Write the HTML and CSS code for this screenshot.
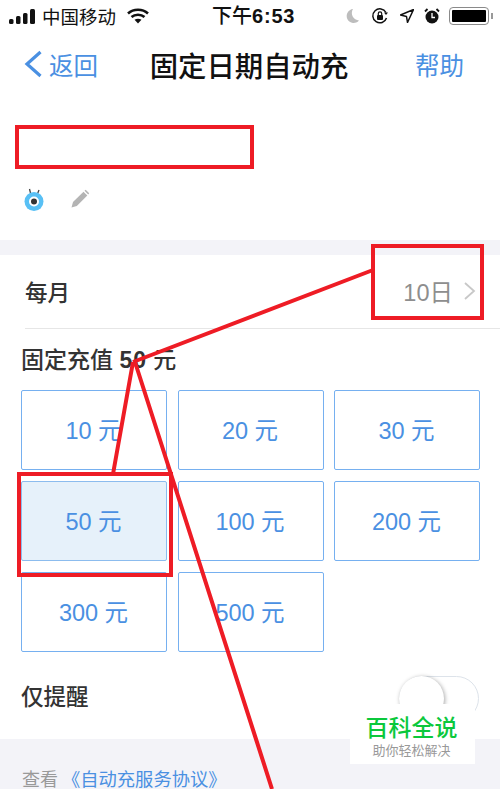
FILE: index.html
```html
<!DOCTYPE html>
<html lang="zh">
<head>
<meta charset="utf-8">
<title>固定日期自动充</title>
<link rel="stylesheet" href="styles.css">
</head>
<body>
<div class="page">
  <div class="status">
    <div class="status-left">
      <svg class="signal" width="26" height="15" viewBox="0 0 26 15"><rect x="0" y="10" width="4.500" height="5" rx="1.500"/><rect x="7" y="7" width="4.500" height="8" rx="1.500"/><rect x="14" y="4" width="4.500" height="11" rx="1.500"/><rect x="21" y="0" width="5" height="15" rx="1.500"/></svg>
      <span class="carrier">中国移动</span>
      <svg class="wifi" width="22" height="16" viewBox="0 0 22 16"><path d="M1 5.500C6.500.5 15.500.5 21 5.500" fill="none" stroke="#111" stroke-width="2.600"/><path d="M4.500 9C8 6 14 6 17.500 9" fill="none" stroke="#111" stroke-width="2.600"/><path d="M7.500 11.800C9.500 10.300 12.500 10.300 14.500 11.800L11 15.500Z" fill="#111"/></svg>
    </div>
    <span class="clock">下午<b class="clock-num">6:53</b></span>
    <div class="status-right">
      <svg class="st-moon" width="16" height="16" viewBox="0 0 16 16"><path d="M9 1A7 7 0 1 0 15 12.500 7.500 7.500 0 0 1 9 1Z" fill="#bdbdbd"/></svg>
      <svg class="st-lock" width="18" height="18" viewBox="0 0 18 18"><path d="M15.500 11A7 7 0 1 1 15 5.500" fill="none" stroke="#111" stroke-width="1.500"/><path d="M13 5.500h4l-2 2.500Z" fill="#111"/><rect x="6" y="8" width="6" height="5" rx="1" fill="#111"/><path d="M7.300 8V6.500a1.700 1.700 0 0 1 3.400 0V8" fill="none" stroke="#111" stroke-width="1.200"/></svg>
      <svg class="st-arrow" width="14" height="14" viewBox="0 0 14 14"><path d="M13.500.5L7.500 13.500 6.500 7.500.5 6Z" fill="none" stroke="#111" stroke-width="1.500" stroke-linejoin="round"/></svg>
      <svg class="st-alarm" width="16" height="16" viewBox="0 0 16 16"><circle cx="8" cy="9" r="6.500" fill="#111"/><path d="M8 5v4.500h3" fill="none" stroke="#fff" stroke-width="1.300"/><path d="M1 3.500L3.500 1M15 3.500L12.500 1" stroke="#111" stroke-width="1.800"/></svg>
      <div class="battery"><div class="battery-fill"></div></div>
      <div class="battery-tip"></div>
    </div>
  </div>

  <nav class="nav">
    <div class="back">
      <svg width="20" height="28" viewBox="0 0 20 28"><path d="M17.500 2L4 14l13.500 12" fill="none" stroke="#4a90e2" stroke-width="3.200"/></svg>
      <span>返回</span>
    </div>
    <h1 class="title">固定日期自动充</h1>
    <span class="help">帮助</span>
  </nav>

  <section class="account">
    <div class="name-slot"></div>
    <div class="account-icons">
      <svg class="mascot" width="22" height="26" viewBox="0 0 22 26"><path d="M8 9L6.500 3M14 9l2-5" stroke="#444" stroke-width="1.300"/><circle cx="11" cy="15.500" r="9.500" fill="#58c0f5"/><circle cx="11" cy="15.500" r="5" fill="#fff"/><circle cx="11" cy="15.500" r="3" fill="#333"/></svg>
      <svg class="pencil" width="20" height="20" viewBox="0 0 20 20"><path d="M1.500 18.500L3 13 13.500 2.800l3.800 3.700L6.800 17Z" fill="#b4b4b4"/><path d="M14.500 1.800l1.200-1 3.500 3.500-1 1.200Z" fill="#b4b4b4"/></svg>
    </div>
  </section>

  <div class="spacer"></div>

  <section class="config">
    <div class="month-row">
      <span class="month-label">每月</span>
      <span class="month-value">10日</span>
      <svg class="chevron" width="13" height="20" viewBox="0 0 13 20"><path d="M2 2l9 8-9 8" fill="none" stroke="#c8c8c8" stroke-width="1.800"/></svg>
    </div>
    <h2 class="amount-title">固定充值 <b class="amount-num">50</b> 元</h2>
    <div class="amount-grid">
      <div class="amount">10 元</div>
      <div class="amount">20 元</div>
      <div class="amount">30 元</div>
      <div class="amount selected">50 元</div>
      <div class="amount">100 元</div>
      <div class="amount">200 元</div>
      <div class="amount">300 元</div>
      <div class="amount">500 元</div>
    </div>
    <div class="remind-row">
      <span class="remind-label">仅提醒</span>
      <div class="toggle"><div class="knob"></div></div>
    </div>
  </section>

  <footer class="foot">查看<span class="link">《自动充服务协议》</span></footer>

  <svg class="marks" width="500" height="789" viewBox="0 0 500 789">
    <g fill="none" stroke="#ee1c25" stroke-width="4">
      <rect x="17" y="127" width="235" height="40"/>
      <rect x="373" y="246" width="109" height="72"/>
      <rect x="19" y="474" width="152" height="101"/>
      <path d="M373 270L133 362M133 362L113 474M135 362L272 789"/>
    </g>
  </svg>

  <div class="watermark">
    <div class="wm-main">百科全说</div>
    <div class="wm-sub">助你轻松解决</div>
  </div>
</div>
</body>
</html>
```
FILE: styles.css
```css
* { box-sizing: border-box; }
html, body { margin: 0; padding: 0; }
body {
  font-family: "Liberation Sans", "Noto Sans CJK SC", sans-serif;
  background: #fff;
  text-spacing-trim: space-all;
}
.page {
  position: relative;
  width: 500px;
  height: 789px;
  overflow: hidden;
  background: #fff;
  display: flex;
  flex-direction: column;
}
.status {
  height: 34px;
  flex: none;
  display: flex;
  align-items: center;
  justify-content: space-between;
  padding: 0 7px 2px 9px;
  color: #111;
  position: relative;
}
.status-left, .status-right { display: flex; align-items: center; }
.signal { fill: #111; margin-right: 7px; }
.carrier { font-size: 18.500px; margin-right: 11px; }
.clock {
  position: absolute;
  left: 212px;
  top: 3px;
  font-size: 20px;
  line-height: 26px;
  font-weight: 500;
}
.clock-num { letter-spacing: .8px; font-weight: 700; }
.status-right { gap: 8px; }
.st-moon { margin-right: 3px; }
.st-lock { margin-right: 3px; }
.st-arrow { margin-right: 2px; }
.battery {
  width: 40px;
  height: 18px;
  border: 1.500px solid #8a8a8a;
  border-radius: 4px;
  padding: 2px;
  margin-left: 1px;
}
.battery-fill { height: 100%; background: #000; border-radius: 1px; }
.battery-tip { width: 2px; height: 6px; background: #999; margin-left: -6px; }
.nav {
  height: 62px;
  flex: none;
  display: flex;
  align-items: center;
  padding: 0 36px 2px 23px;
  position: relative;
}
.back { display: flex; align-items: center; gap: 6px; color: #4a90e2; font-size: 24.500px; }
.title {
  position: absolute;
  left: 0;
  right: 0;
  margin: 0;
  text-align: center;
  font-size: 28.400px;
  font-weight: 500;
  color: #111;
  padding-right: 2px;
}
.help { margin-left: auto; color: #4a90e2; font-size: 24.500px; position: relative; }
.account {
  height: 144px;
  flex: none;
  padding: 30px 0 0 23px;
}
.name-slot { height: 41px; }
.account-icons { display: flex; align-items: center; gap: 25px; margin-top: 19px; }
.mascot { flex: none; }
.pencil { flex: none; }
.spacer { height: 15px; flex: none; background: #f3f3f8; }
.config { flex: none; height: 484px; padding: 0 20px 0 21px; }
.month-row {
  display: flex;
  align-items: center;
  height: 74px;
  margin-right: -20px;
  margin-left: 4px;
  padding-right: 24px;
  padding-bottom: 2px;
  border-bottom: 1px solid #e6e6e6;
  font-size: 22.500px;
  color: #333;
}
.month-label { font-weight: 500; }
.month-value { margin-left: auto; color: #8e8e8e; margin-right: 10px; font-size: 23.500px; }
.amount-title {
  margin: 16px 0 14px;
  font-size: 23px;
  line-height: 31px;
  font-weight: 500;
  color: #333;
}
.amount-num { font-weight: 700; letter-spacing: 1px; }
.amount-grid {
  display: grid;
  grid-template-columns: repeat(3, 146px);
  grid-auto-rows: 80px;
  gap: 11px 10.500px;
}
.amount {
  border: 1px solid #76b0f0;
  border-radius: 2px;
  display: flex;
  align-items: center;
  justify-content: center;
  color: #4a90e2;
  font-size: 23.500px;
  padding: 0 1px 2px 0;
}
.amount.selected { background: #e6f1fa; border-color: #8cbcee; }
.remind-row {
  display: flex;
  align-items: center;
  justify-content: space-between;
  height: 89px;
  font-size: 22.500px;
  font-weight: 500;
  color: #333;
}
.remind-label { margin-bottom: 4px; }
.toggle {
  width: 80px;
  height: 45px;
  margin: 3px 1px 0 0;
  border: 1px solid #dde3ea;
  border-radius: 23px;
  background: #fff;
  position: relative;
}
.knob {
  position: absolute;
  left: -1px;
  top: -1px;
  width: 45px;
  height: 45px;
  border-radius: 50%;
  background: #fff;
  box-shadow: 1px 1px 4px rgba(0, 0, 0, .35);
}
.foot {
  flex: 1;
  background: #f3f3f8;
  padding: 28px 0 0 22px;
  font-size: 18px;
  line-height: 26px;
  color: #999;
}
.link { color: #4a90e2; margin-left: 4px; font-size: 18.300px; }
.marks { position: absolute; left: 0; top: 0; pointer-events: none; }
.watermark {
  position: absolute;
  left: 350px;
  top: 704px;
  width: 125px;
  height: 60px;
  background: #fff;
  text-align: center;
  padding-right: 2px;
}
.wm-main { font-size: 23px; line-height: 25px; margin-top: 12px; font-weight: 500; color: #0bc83c; }
.wm-sub { font-size: 13px; line-height: 18px; margin-top: 1px; color: #999; }
```
